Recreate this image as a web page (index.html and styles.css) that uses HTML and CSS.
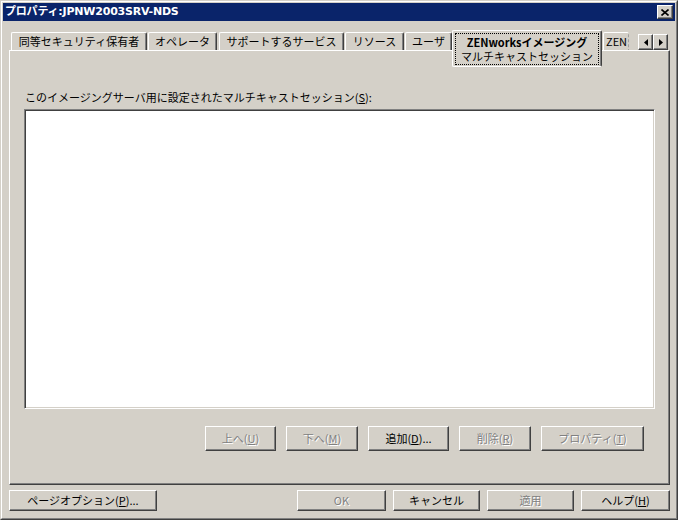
FILE: index.html
```html
<!DOCTYPE html>
<html lang="ja">
<head>
<meta charset="utf-8">
<title>プロパティ:JPNW2003SRV-NDS</title>
<link rel="stylesheet" href="styles.css">
</head>
<body>
<div class="window">
  <div class="frame">
    <div class="titlebar">
      <span class="title">プロパティ:JPNW2003SRV-NDS</span>
      <span class="close">
        <svg width="8" height="7" viewBox="0 0 8 7"><path d="M0.5 0.5 L7.5 6.5 M7.5 0.5 L0.5 6.5" stroke="#000" stroke-width="1.6" fill="none"/></svg>
      </span>
    </div>
    <div class="content">
      <div class="tabs">
        <div class="tab t1">同等セキュリティ保有者</div>
        <div class="tab t2">オペレータ</div>
        <div class="tab t3">サポートするサービス</div>
        <div class="tab t4">リソース</div>
        <div class="tab t5">ユーザ</div>
        <div class="tab active">
          <div class="focus">
            <div class="line bold">ZENworksイメージング</div>
            <div class="line">マルチキャストセッション</div>
          </div>
        </div>
        <div class="tab clip">ZEN</div>
        <div class="scroller">
          <span class="arrow"><svg width="4" height="7" viewBox="0 0 4 7"><polygon points="4,0 0,3.5 4,7" fill="#000"/></svg></span>
          <span class="arrow"><svg width="4" height="7" viewBox="0 0 4 7"><polygon points="0,0 4,3.5 0,7" fill="#000"/></svg></span>
        </div>
      </div>
      <div class="panel">
        <div class="label">このイメージングサーバ用に設定されたマルチキャストセッション(<u>S</u>):</div>
        <div class="list"></div>
        <div class="actions">
          <span class="btn disabled w71">上へ(<u>U</u>)</span>
          <span class="btn disabled w72">下へ(<u>M</u>)</span>
          <span class="btn w81">追加(<u>D</u>)...</span>
          <span class="btn disabled w72">削除(<u>R</u>)</span>
          <span class="btn disabled w103">プロパティ(<u>T</u>)</span>
        </div>
      </div>
      <div class="footer">
        <span class="btn fbtn w148">ページオプション(<u>P</u>)...</span>
        <div class="right">
          <span class="btn fbtn disabled w89">OK</span>
          <span class="btn fbtn w87">キャンセル</span>
          <span class="btn fbtn disabled w87">適用</span>
          <span class="btn fbtn w89">ヘルプ(<u>H</u>)</span>
        </div>
      </div>
    </div>
  </div>
</div>
</body>
</html>
```

FILE: styles.css
```css
html, body {
  margin: 0;
  padding: 0;
  background: #d4d0c8;
}

body {
  font-family: "Noto Sans CJK JP", sans-serif;
  font-size: 11px;
  color: #000;
}

.window {
  width: 678px;
  height: 520px;
  box-sizing: border-box;
  border: 1px solid;
  border-color: #d4d0c8 #404040 #404040 #d4d0c8;
  background: #d4d0c8;
}

.frame {
  height: 100%;
  box-sizing: border-box;
  border: 1px solid;
  border-color: #ffffff #808080 #808080 #ffffff;
  padding: 1px;
  display: flex;
  flex-direction: column;
}

.titlebar {
  height: 18px;
  background: #0a246a;
  display: flex;
  align-items: center;
  justify-content: space-between;
  padding: 0 2px 0 2px;
}

.title {
  color: #fff;
  font-family: "DejaVu Sans", "Noto Sans CJK JP", sans-serif;
  font-weight: bold;
  font-size: 11px;
  line-height: 18px;
  letter-spacing: -0.2px;
}

.close {
  width: 16px;
  height: 14px;
  box-sizing: border-box;
  background: #d4d0c8;
  border: 1px solid;
  border-color: #ffffff #404040 #404040 #ffffff;
  box-shadow: inset -1px -1px 0 #808080;
  display: flex;
  align-items: center;
  justify-content: center;
  padding-right: 1px;
}

.content {
  flex: 1;
  padding: 9px 5px 0 6px;
  display: flex;
  flex-direction: column;
}

/* Tabs */
.tabs {
  height: 20px;
  display: flex;
  align-items: flex-start;
  padding-left: 2px;
}

.tab {
  box-sizing: border-box;
  height: 18px;
  margin-top: 2px;
  border-top: 1px solid #fff;
  border-left: 1px solid #fff;
  border-right: 1px solid #404040;
  box-shadow: inset -1px 0 0 #808080;
  border-radius: 2px 2px 0 0;
  line-height: 16px;
  text-align: center;
  white-space: nowrap;
  overflow: hidden;
}

.t1 { width: 136px; }
.t2 { width: 69px; margin-left: 1px; }
.t3 { width: 125px; margin-left: 2px; }
.t4 { width: 59px; margin-left: 1px; }
.t5 { width: 47px; margin-left: 1px; }

.tab.active {
  position: relative;
  z-index: 2;
  width: 150px;
  height: 37px;
  margin-top: 0;
  background: #d4d0c8;
  border-bottom: 1px solid #fff;
  border-radius: 2px;
  padding: 2px 2px 1px 2px;
}

.focus {
  height: 100%;
  box-sizing: border-box;
  border: 1px dotted #000;
  display: flex;
  flex-direction: column;
  justify-content: center;
  gap: 1px;
}

.line {
  height: 13px;
  line-height: 13px;
}

.bold {
  font-weight: bold;
}

.tab.clip {
  width: 26px;
  margin-left: 1px;
  border-right: 1px dashed #a0a0a0;
  box-shadow: none;
  text-align: left;
  padding-left: 2px;
}

.scroller {
  display: flex;
  margin-left: 9px;
  margin-top: 4px;
}

.arrow {
  width: 15px;
  height: 16px;
  box-sizing: border-box;
  border: 1px solid;
  border-color: #ffffff #404040 #404040 #ffffff;
  box-shadow: inset -1px -1px 0 #808080;
  display: flex;
  align-items: center;
  justify-content: center;
}

/* Panel */
.panel {
  box-sizing: border-box;
  height: 435px;
  border-top: 1px solid #fff;
  border-left: 1px solid #fff;
  border-right: 1px solid #404040;
  border-bottom: 1px solid #404040;
  box-shadow: inset -1px -1px 0 #808080;
  padding: 39px 0 0 14px;
}

.label {
  line-height: 14px;
  padding-left: 1px;
  white-space: nowrap;
}

.list {
  margin-top: 5px;
  width: 631px;
  height: 300px;
  box-sizing: border-box;
  background: #fff;
  border: 1px solid;
  border-color: #808080 #ffffff #ffffff #808080;
  box-shadow: inset 1px 1px 0 #404040, inset -1px -1px 0 #d4d0c8;
}

.actions {
  margin-top: 17px;
  padding-left: 181px;
  display: flex;
  gap: 10px;
}

/* Buttons */
.btn {
  box-sizing: border-box;
  height: 25px;
  border: 1px solid;
  border-color: #ffffff #404040 #404040 #ffffff;
  box-shadow: inset -1px -1px 0 #808080;
  display: flex;
  align-items: center;
  justify-content: center;
  white-space: nowrap;
  padding-bottom: 1px;
}

.btn.disabled {
  color: #808080;
  text-shadow: 1px 1px 0 #fff;
}

.w71 { width: 71px; }
.w72 { width: 72px; }
.w81 { width: 81px; }
.w103 { width: 103px; }
.w148 { width: 148px; }
.w89 { width: 89px; }
.w87 { width: 87px; }

.footer {
  margin-top: 5px;
  display: flex;
  justify-content: space-between;
}

.fbtn {
  height: 21px;
}

.right {
  display: flex;
  gap: 7px;
}
```
